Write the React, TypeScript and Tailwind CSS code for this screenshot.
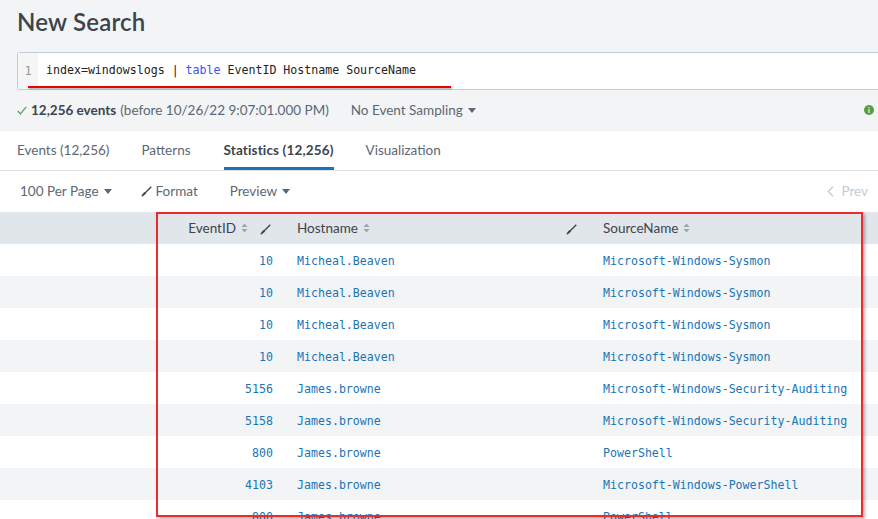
import React from 'react'

const rows = [
  { id: '10', host: 'Micheal.Beaven', source: 'Microsoft-Windows-Sysmon' },
  { id: '10', host: 'Micheal.Beaven', source: 'Microsoft-Windows-Sysmon' },
  { id: '10', host: 'Micheal.Beaven', source: 'Microsoft-Windows-Sysmon' },
  { id: '10', host: 'Micheal.Beaven', source: 'Microsoft-Windows-Sysmon' },
  { id: '5156', host: 'James.browne', source: 'Microsoft-Windows-Security-Auditing' },
  { id: '5158', host: 'James.browne', source: 'Microsoft-Windows-Security-Auditing' },
  { id: '800', host: 'James.browne', source: 'PowerShell' },
  { id: '4103', host: 'James.browne', source: 'Microsoft-Windows-PowerShell' },
  { id: '800', host: 'James.browne', source: 'PowerShell' },
]

function Caret() {
  return (
    <svg width="8" height="5" viewBox="0 0 8 5" className="ml-[5px] inline-block">
      <path d="M0 0h8L4 5z" fill="#5c6773" />
    </svg>
  )
}

function Sort() {
  return (
    <svg width="7" height="10" viewBox="0 0 7 10" className="ml-[5px] inline-block">
      <path d="M0.5 4L3.5 0.5L6.5 4z" fill="#9aa4ae" />
      <path d="M0.5 6L3.5 9.5L6.5 6z" fill="#9aa4ae" />
    </svg>
  )
}

function Pencil({ color = '#3c444d' }: { color?: string }) {
  return (
    <svg width="11" height="11" viewBox="0 0 11 11" className="inline-block">
      <path d="M10.3 0.7L4 7" stroke={color} strokeWidth="1.3" />
      <path d="M3.4 5.9L5.1 7.6L2 10.2L0.6 10.4L0.8 9z" fill={color} />
    </svg>
  )
}

export default function App() {
  return (
    <div className="relative w-[878px] h-[519px] overflow-hidden bg-white text-[#3c444d] font-['Lato','Open_Sans',sans-serif]">
      {/* header area */}
      <div className="bg-[#f2f4f5] pl-[17px] pt-[7px] pb-[9px]">
        <h1 className="text-[24px] font-semibold leading-[30px] text-[#3c444d] tracking-[0.2px]">New Search</h1>
        <div className="mt-[15px] h-[38px] flex items-stretch bg-white border border-[#c3cbd4] border-r-0 rounded-l-[3px]">
          <div className="w-[20px] bg-[#f5f5f5] text-[#999] text-[12px] font-['DejaVu_Sans_Mono',monospace] flex items-center justify-center">
            1
          </div>
          <div className="pl-[8px] flex items-center text-[11.6px] font-['DejaVu_Sans_Mono',monospace] text-[#222] whitespace-pre">
            index=windowslogs | <span className="text-[#3753ff]">table</span> EventID Hostname SourceName
          </div>
        </div>
        <div className="mt-[8px] h-[24px] flex items-center text-[13.5px] text-[#5c6773] pr-[4px]">
          <svg width="10" height="9" viewBox="0 0 10 9" className="mr-[4px]">
            <path d="M0.8 5L3.5 7.8L9.2 0.8" stroke="#4fa14f" strokeWidth="1.2" fill="none" />
          </svg>
          <span className="font-bold text-[#3c444d]">12,256 events</span>
          <span className="ml-[4px]">(before 10/26/22 9:07:01.000 PM)</span>
          <span className="ml-[22px] flex items-center">
            No Event Sampling
            <Caret />
          </span>
          <span className="ml-auto w-[10px] h-[10px] rounded-full bg-[#5a9e3c] text-white text-[7px] font-bold flex items-center justify-center leading-none">
            i
          </span>
        </div>
      </div>

      {/* tabs */}
      <div className="h-[40px] flex items-stretch border-b border-[#dde2e7] pl-[17px] text-[13.5px] text-[#5c6773]">
        <div className="flex items-center">Events (12,256)</div>
        <div className="flex items-center ml-[32px]">Patterns</div>
        <div className="flex items-center ml-[33px] font-bold text-[#3c444d] border-b-[3px] border-[#1a74b6] pt-[3px] tracking-[0.15px]">
          Statistics (12,256)
        </div>
        <div className="flex items-center ml-[32px]">Visualization</div>
      </div>

      {/* toolbar */}
      <div className="h-[41px] flex items-center pl-[20px] pr-[10px] text-[13.5px] text-[#5c6773]">
        <span className="flex items-center">
          100 Per Page
          <Caret />
        </span>
        <span className="flex items-center ml-[29px]">
          <Pencil color="#3c444d" />
          <span className="ml-[4px]">Format</span>
        </span>
        <span className="flex items-center ml-[32px]">
          Preview
          <Caret />
        </span>
        <span className="ml-auto flex items-center text-[#c3cbd4]">
          <svg width="7" height="11" viewBox="0 0 7 11" className="mr-[7px]">
            <path d="M6 0.8L1.3 5.5L6 10.2" stroke="#c3cbd4" strokeWidth="1.3" fill="none" />
          </svg>
          Prev
        </span>
      </div>

      {/* table */}
      <div className="grid grid-cols-[160px_125px_306px_1fr]">
        <div className="contents text-[13.5px] text-[#3c444d]">
          <div className="h-[32px] bg-[#e1e6eb]" />
          <div className="h-[32px] bg-[#e1e6eb] flex items-center justify-end pr-[14px]">
            EventID
            <Sort />
            <span className="ml-[12px]">
              <Pencil />
            </span>
          </div>
          <div className="h-[32px] bg-[#e1e6eb] flex items-center pl-[12px] pr-[14px]">
            Hostname
            <Sort />
            <span className="ml-auto">
              <Pencil />
            </span>
          </div>
          <div className="h-[32px] bg-[#e1e6eb] flex items-center pl-[12px]">
            SourceName
            <Sort />
          </div>
        </div>
        {rows.map((r, i) => {
          const bg = i % 2 === 0 ? 'bg-white' : 'bg-[#f2f4f5]'
          return (
            <div key={i} className="contents font-['DejaVu_Sans_Mono',monospace] text-[11.6px] text-[#1a74b6]">
              <div className={`h-[32px] ${bg}`} />
              <div className={`h-[32px] ${bg} flex items-center justify-end pr-[12px] pt-[3px]`}>{r.id}</div>
              <div className={`h-[32px] ${bg} flex items-center pl-[12px] pt-[3px]`}>{r.host}</div>
              <div className={`h-[32px] ${bg} flex items-center pl-[12px] pt-[3px]`}>{r.source}</div>
            </div>
          )
        })}
      </div>

      {/* annotations */}
      <div className="absolute left-[28px] top-[86px] w-[423px] h-[2px] bg-[#e8000b] shadow-[1px_1px_2px_rgba(0,0,0,0.35)]" />
      <div className="absolute left-[156px] top-[212px] w-[707px] h-[305px] border-2 border-[#ec2b2f] shadow-[2px_2px_3px_rgba(0,0,0,0.3)]" />
    </div>
  )
}
